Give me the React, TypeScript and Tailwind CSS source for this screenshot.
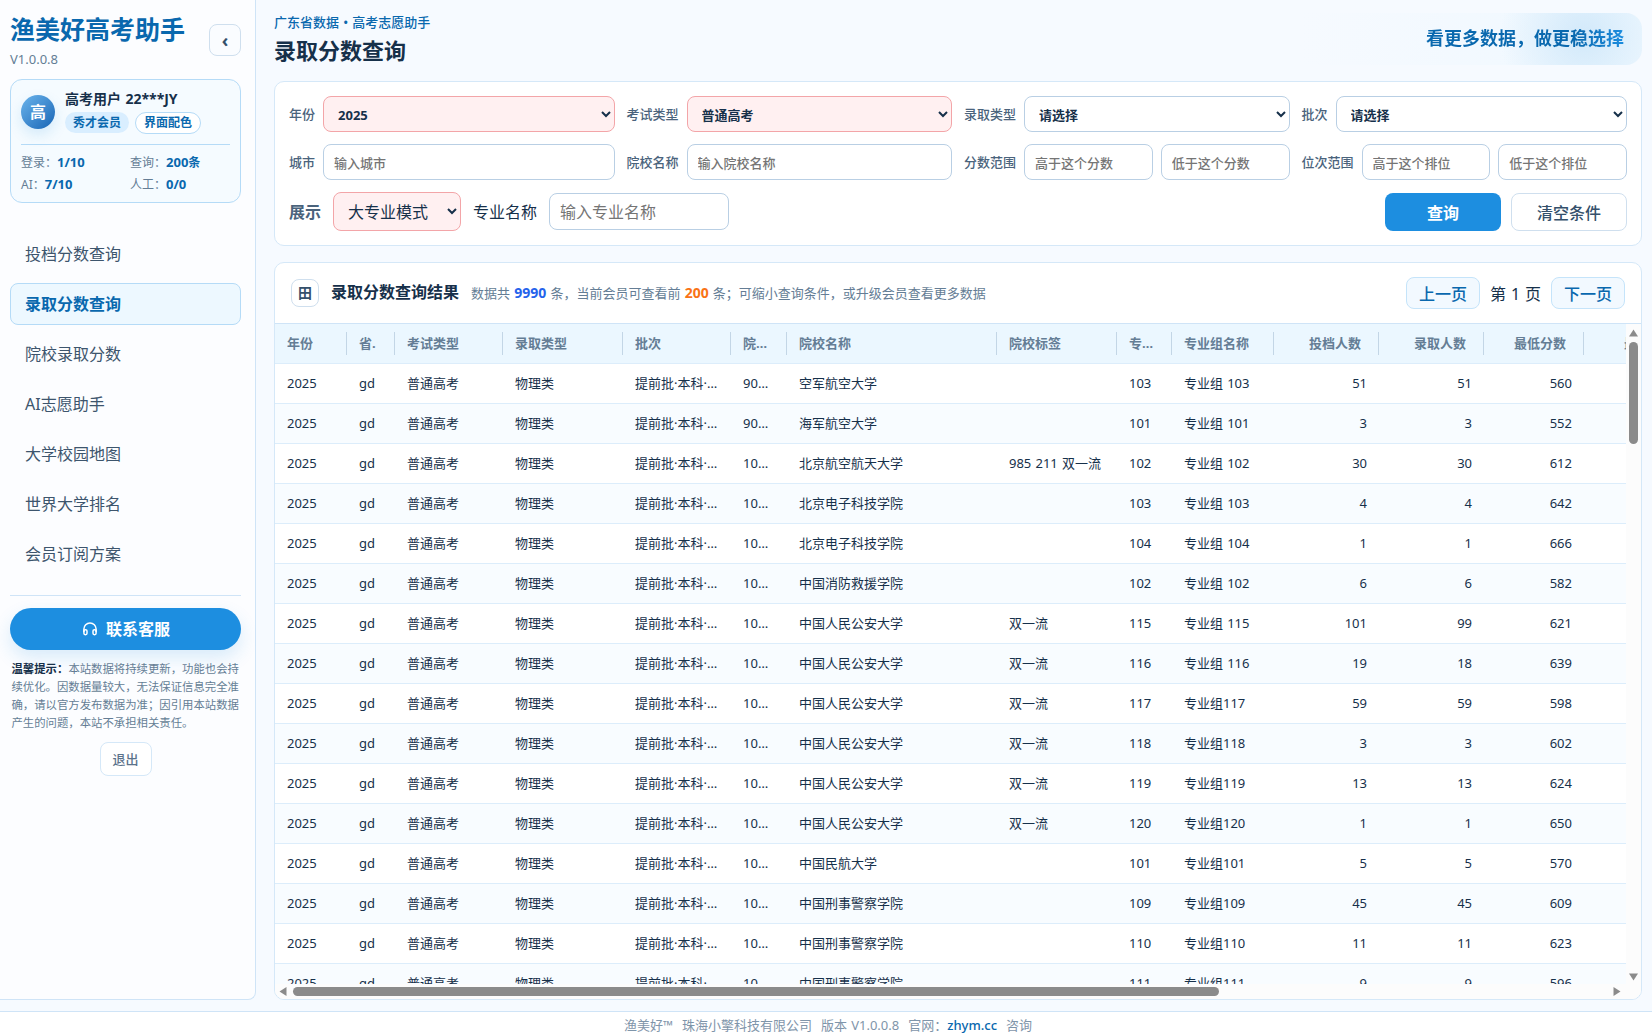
import React from "react";

const NAV_ITEMS = [
    "投档分数查询",
    "录取分数查询",
    "院校录取分数",
    "AI志愿助手",
    "大学校园地图",
    "世界大学排名",
    "会员订阅方案",
];

interface Column {
    title: string;
    width: string;
    numeric?: boolean;
}

const COLUMNS: Column[] = [
    { title: "年份", width: "w-[72px]" },
    { title: "省.", width: "w-[48px]" },
    { title: "考试类型", width: "w-[108px]" },
    { title: "录取类型", width: "w-[120px]" },
    { title: "批次", width: "w-[108px]" },
    { title: "院校代码", width: "w-[56px]" },
    { title: "院校名称", width: "w-[210px]" },
    { title: "院校标签", width: "w-[120px]" },
    { title: "专业组", width: "w-[55px]" },
    { title: "专业组名称", width: "w-[102px]" },
    { title: "投档人数", width: "w-[105px]", numeric: true },
    { title: "录取人数", width: "w-[105px]", numeric: true },
    { title: "最低分数", width: "w-[100px]", numeric: true },
    { title: "最低排位", width: "w-[110px]", numeric: true },
];

// 院校代码, 院校名称, 标签, 专业组, 专业组名称, 投档, 录取, 最低分
const RECORDS: string[][] = [
    ["90001", "空军航空大学", "", "103", "专业组 103", "51", "51", "560"],
    ["90002", "海军航空大学", "", "101", "专业组 101", "3", "3", "552"],
    ["10006", "北京航空航天大学", "985 211 双一流", "102", "专业组 102", "30", "30", "612"],
    ["10018", "北京电子科技学院", "", "103", "专业组 103", "4", "4", "642"],
    ["10018", "北京电子科技学院", "", "104", "专业组 104", "1", "1", "666"],
    ["10040", "中国消防救援学院", "", "102", "专业组 102", "6", "6", "582"],
    ["10041", "中国人民公安大学", "双一流", "115", "专业组 115", "101", "99", "621"],
    ["10041", "中国人民公安大学", "双一流", "116", "专业组 116", "19", "18", "639"],
    ["10041", "中国人民公安大学", "双一流", "117", "专业组117", "59", "59", "598"],
    ["10041", "中国人民公安大学", "双一流", "118", "专业组118", "3", "3", "602"],
    ["10041", "中国人民公安大学", "双一流", "119", "专业组119", "13", "13", "624"],
    ["10041", "中国人民公安大学", "双一流", "120", "专业组120", "1", "1", "650"],
    ["10059", "中国民航大学", "", "101", "专业组101", "5", "5", "570"],
    ["10175", "中国刑事警察学院", "", "109", "专业组109", "45", "45", "609"],
    ["10175", "中国刑事警察学院", "", "110", "专业组110", "11", "11", "623"],
    ["10175", "中国刑事警察学院", "", "111", "专业组111", "9", "9", "596"],
];

const Sidebar: React.FC = () => (
    <aside className="flex h-[1000px] w-64 shrink-0 flex-col rounded-br-lg border-r border-b border-[#cfe4f7] bg-[#fcfdff] px-[10px] pr-[14px]">
        <div className="flex h-[79px] justify-between">
            <div className="pt-3">
                <h1 className="text-[25px] leading-[35px] font-bold whitespace-nowrap text-[#0968ae]">渔美好高考助手</h1>
                <p className="text-[13px] leading-6 text-[#647d95]">V1.0.0.8</p>
            </div>
            <button
                aria-label="收起"
                className="mt-6 flex size-8 items-center justify-center rounded-lg border border-[#cfdfee] bg-[#fafcff] text-lg leading-none font-bold text-[#34506b]"
            >
                ‹
            </button>
        </div>

        {/* 用户卡片 */}
        <div className="h-[124px] shrink-0 rounded-xl border border-[#b5dbf7] bg-[#f5fbff] px-[10px] text-xs">
            <div className="flex h-[65px] gap-[10px] border-b border-[#b5dbf7]">
                <div className="mt-[15px] flex size-[34px] items-center justify-center rounded-full bg-linear-135 from-[#6bb5ec] to-[#1565b5] text-base font-bold text-white shadow-[0_6px_14px_rgba(29,142,224,0.15)]">
                    高
                </div>
                <div className="pt-2">
                    <p className="h-6 text-sm leading-[21px] font-bold text-[#16304a]">高考用户 22***JY</p>
                    <div className="flex items-start gap-[6px] font-bold text-[#0968ae]">
                        <span className="h-[21px] rounded-full bg-[#d9eeff] px-2 leading-[21px]">秀才会员</span>
                        <button className="h-[22px] rounded-full border border-[#b5dbf7] bg-white px-2 leading-5 font-bold">界面配色</button>
                    </div>
                </div>
            </div>
            <div className="grid grid-cols-[109px_1fr] auto-rows-[22px] pt-[7px] leading-[22px] text-[#647d95]">
                <p>登录：<b className="text-[13px] leading-none text-[#0968ae]">1/10</b></p>
                <p>查询：<b className="text-[#0968ae]"><span className="text-[13px] leading-none">200</span>条</b></p>
                <p>AI：<b className="text-[13px] leading-none text-[#0968ae]">7/10</b></p>
                <p>人工：<b className="text-[13px] leading-none text-[#0968ae]">0/0</b></p>
            </div>
        </div>

        <nav className="mt-[30px] flex flex-col gap-2">
            {NAV_ITEMS.map((item, i) => (
                <a
                    key={item}
                    className={
                        i === 1
                            ? "h-[42px] rounded-lg border border-[#b5dbf7] bg-[#edf8ff] px-[14px] leading-10 font-bold text-[#0968ae]"
                            : "h-[42px] rounded-lg border border-transparent px-[14px] leading-10 text-[#3d556d]"
                    }
                >
                    {item}
                </a>
            ))}
        </nav>

        <div className="mt-5 flex flex-col items-center border-t border-[#cfe4f7] pt-3">
            <button className="flex h-[42px] w-full items-center justify-center gap-2 rounded-full bg-[#1d8ee0] pl-px font-bold text-white shadow-[0_8px_18px_rgba(29,142,224,0.16)]">
                <svg width="16" height="16" viewBox="0 0 16 16" fill="none" stroke="currentColor" strokeWidth="1.5">
                    <path d="M1.9 11V8a6.1 6.1 0 0 1 12.2 0v3" />
                    <rect x="1.9" y="8.7" width="3.1" height="5" rx="1.4" />
                    <rect x="11" y="8.7" width="3.1" height="5" rx="1.4" />
                </svg>
                联系客服
            </button>
            <p className="mt-[10px] w-[228px] text-[11.38px] leading-[18px] text-[#647d95]">
                <b className="text-[#16304a]">温馨提示：</b>
                本站数据将持续更新，功能也会持续优化。因数据量较大，无法保证信息完全准确，请以官方发布数据为准；因引用本站数据产生的问题，本站不承担相关责任。
            </p>
            <button className="mt-[10px] h-[34px] w-[52px] rounded-lg border border-[#d5e8f8] bg-white pt-px text-[13px] font-medium text-[#5b738b]">
                退出
            </button>
        </div>
    </aside>
);

interface FieldProps {
    label: string;
    children: React.ReactNode;
}

const Field: React.FC<FieldProps> = ({ label, children }) => (
    <label className="flex items-center gap-2">
        <span className="shrink-0 pt-0.5 font-medium text-[#4a637c]">{label}</span>
        {children}
    </label>
);

const SelectBox: React.FC<{ value: string; active?: boolean }> = ({ value, active }) => (
    <select
        className={
            active
                ? "h-9 w-0 flex-1 rounded-lg border border-[#f3a5a8] bg-[#fff0f1] px-[10px] pt-px font-bold text-[#16304a]"
                : "h-9 w-0 flex-1 rounded-lg border border-[#b9cfe4] bg-white px-[10px] pt-px font-bold text-[#16304a]"
        }
    >
        <option>{value}</option>
    </select>
);

const TextBox: React.FC<{ hint: string }> = ({ hint }) => (
    <input
        placeholder={hint}
        className="h-9 w-0 flex-1 rounded-lg border border-[#b9cfe4] bg-white px-[10px] pt-0.5 font-medium placeholder:text-[#757575]"
    />
);

const FilterPanel: React.FC = () => (
    <section className="mt-4 h-[165px] rounded-[10px] border border-[#d5e8f8] bg-white p-[14px]">
        <div className="grid grid-cols-4 gap-3 text-[13px]">
            <Field label="年份"><SelectBox value="2025" active /></Field>
            <Field label="考试类型"><SelectBox value="普通高考" active /></Field>
            <Field label="录取类型"><SelectBox value="请选择" /></Field>
            <Field label="批次"><SelectBox value="请选择" /></Field>
            <Field label="城市"><TextBox hint="输入城市" /></Field>
            <Field label="院校名称"><TextBox hint="输入院校名称" /></Field>
            <Field label="分数范围">
                <TextBox hint="高于这个分数" />
                <TextBox hint="低于这个分数" />
            </Field>
            <Field label="位次范围">
                <TextBox hint="高于这个排位" />
                <TextBox hint="低于这个排位" />
            </Field>
        </div>
        <div className="mt-3 flex h-[39px] items-center gap-3 text-[#16304a]">
            <span className="pt-px font-bold text-[#4a637c]">展示</span>
            <select className="h-[39px] w-32 rounded-lg border border-[#f3a5a8] bg-[#fff0f1] px-[10px]">
                <option>大专业模式</option>
            </select>
            <span className="pt-px">专业名称</span>
            <input
                placeholder="输入专业名称"
                className="h-[37px] w-[180px] rounded-lg border border-[#b9cfe4] px-[10px] placeholder:text-[#757575]"
            />
            <div className="ml-auto flex gap-[10px] pt-px">
                <button className="h-[38px] w-[116px] rounded-lg bg-[#1d8ee0] pt-px font-bold text-white">查询</button>
                <button className="h-[38px] w-[116px] rounded-lg border border-[#cfdfee] bg-white pt-px font-medium text-[#34506b]">清空条件</button>
            </div>
        </div>
    </section>
);

const ResultTable: React.FC = () => (
    <div className="h-[660px] overflow-hidden">
        <table className="w-[1419px] table-fixed border-separate border-spacing-0 text-[13px] text-[#16304a]">
            <thead>
                <tr className="h-10 bg-[#ebf7ff] text-[#647d95]">
                    {COLUMNS.map((col) => (
                        <th key={col.title} className={`${col.width} border-b border-[#dcedfb] p-0 font-bold`}>
                            <div
                                className={`flex h-[23px] items-center border-r border-[#c3d6e6] pl-3 ${
                                    col.numeric ? "justify-end pr-[17px]" : "pr-[6px]"
                                }`}
                            >
                                <span className="truncate">{col.title}</span>
                            </div>
                        </th>
                    ))}
                </tr>
            </thead>
            <tbody>
                {RECORDS.map((record, r) => (
                    <tr key={r} className="h-10 even:bg-[#f8fcff]">
                        {["2025", "gd", "普通高考", "物理类", "提前批·本科·军检院校", ...record, ""].map((value, c) => (
                            <td
                                key={c}
                                className={`truncate border-b border-[#dcedfb] px-3 pt-px pb-0 ${COLUMNS[c].numeric ? "text-right" : ""}`}
                            >
                                {value}
                            </td>
                        ))}
                    </tr>
                ))}
            </tbody>
        </table>
    </div>
);

const VerticalScrollbar: React.FC = () => (
    <div className="flex flex-col items-center bg-[#fcfcfc] pt-[5px] pr-[2px] pb-[3px] pl-px text-[#8b8b8b]">
        <svg width="9" height="8" viewBox="0 0 9 8" fill="currentColor"><path d="M4.5 0.5 9 7.5H0z" /></svg>
        <div className="mt-[5px] h-[102px] w-[9px] rounded-full bg-[#8b8b8b]" />
        <svg className="mt-auto" width="9" height="8" viewBox="0 0 9 8" fill="currentColor"><path d="M4.5 7.5 9 .5H0z" /></svg>
    </div>
);

const HorizontalScrollbar: React.FC = () => (
    <div className="flex h-[15px] items-center bg-[#fcfcfc] pr-[5px] pl-1 text-[#8b8b8b]">
        <svg width="8" height="9" viewBox="0 0 8 9" fill="currentColor"><path d="M.5 4.5 7.5 0v9z" /></svg>
        <div className="ml-[6px] h-[9px] w-[926px] rounded-full bg-[#8b8b8b]" />
        <svg className="ml-auto" width="8" height="9" viewBox="0 0 8 9" fill="currentColor"><path d="M7.5 4.5.5 0v9z" /></svg>
    </div>
);

const ResultPanel: React.FC = () => (
    <section className="mt-4 flex h-[738px] flex-col overflow-hidden rounded-[10px] border border-[#d5e8f8] bg-white">
        <div className="flex h-[61px] shrink-0 items-center border-b border-[#cfe4f7] px-4 text-[#16304a]">
            <span className="flex size-7 items-center justify-center rounded-lg border border-[#cfdfee] text-sm font-bold text-[#34506b]">田</span>
            <h3 className="ml-3 pb-0.5 font-bold">录取分数查询结果</h3>
            <p className="ml-3 text-[13px] leading-5 text-[#647d95]">
                数据共 <b className="text-sm leading-none text-[#2563eb]">9990</b> 条，当前会员可查看前{" "}
                <b className="text-sm leading-none text-[#f97316]">200</b> 条；可缩小查询条件，或升级会员查看更多数据
            </p>
            <div className="ml-auto flex items-center gap-[10px]">
                <button className="h-8 w-[74px] rounded-lg border border-[#c5e4fa] bg-[#f2f9ff] pt-px font-medium text-[#0968ae]">上一页</button>
                <span className="pt-px">第 1 页</span>
                <button className="h-8 w-[74px] rounded-lg border border-[#c5e4fa] bg-[#f2f9ff] pt-px font-medium text-[#0968ae]">下一页</button>
            </div>
        </div>
        <div className="grid grid-cols-[1351px_15px] grid-rows-[660px_15px]">
            <ResultTable />
            <VerticalScrollbar />
            <HorizontalScrollbar />
            <div className="bg-[#fcfcfc]" />
        </div>
    </section>
);

const App: React.FC = () => (
    <div className="flex h-[1034px] w-[1652px] flex-col overflow-hidden bg-[#f6faff] font-['Noto_Sans','Noto_Sans_CJK_SC',sans-serif] text-base [word-spacing:0.8px]">
        <div className="flex h-[1011px]">
            <Sidebar />
            <main className="w-[1386px] pl-[18px]">
                <div className="w-[1368px]">
                    <header className="flex h-[65px] justify-between">
                        <div className="pt-3">
                            <p className="text-[13px] leading-5 font-medium text-[#0968ae]">广东省数据 • 高考志愿助手</p>
                            <h2 className="mt-[3px] text-[22px] leading-[30px] font-bold text-[#16304a]">录取分数查询</h2>
                        </div>
                        <div className="mt-[13px] flex h-[52px] w-[342px] items-center justify-end rounded-r-2xl bg-[radial-gradient(circle_at_83%_45%,#d2e9fa_0,#d2e9fa00_84px),linear-gradient(90deg,#f6faff,#eff8ff)] pr-[18px] pb-0.5">
                            <span className="bg-linear-to-r from-[#0968ae] from-75% to-[#1d8ee0] bg-clip-text text-lg font-bold text-transparent">
                                看更多数据，做更稳选择
                            </span>
                        </div>
                    </header>
                    <FilterPanel />
                    <ResultPanel />
                </div>
            </main>
        </div>
        <footer className="flex h-[23px] justify-center gap-[9px] border-t border-[#cfe4f7] bg-white pt-[3px] pl-1 text-[13px] leading-5 text-[#7f95aa]">
            <span>渔美好™</span>
            <span>珠海小擎科技有限公司</span>
            <span>版本 V1.0.0.8</span>
            <span>官网：<a className="font-medium text-[#0968ae]">zhym.cc</a></span>
            <span>咨询</span>
        </footer>
    </div>
);

export default App;
